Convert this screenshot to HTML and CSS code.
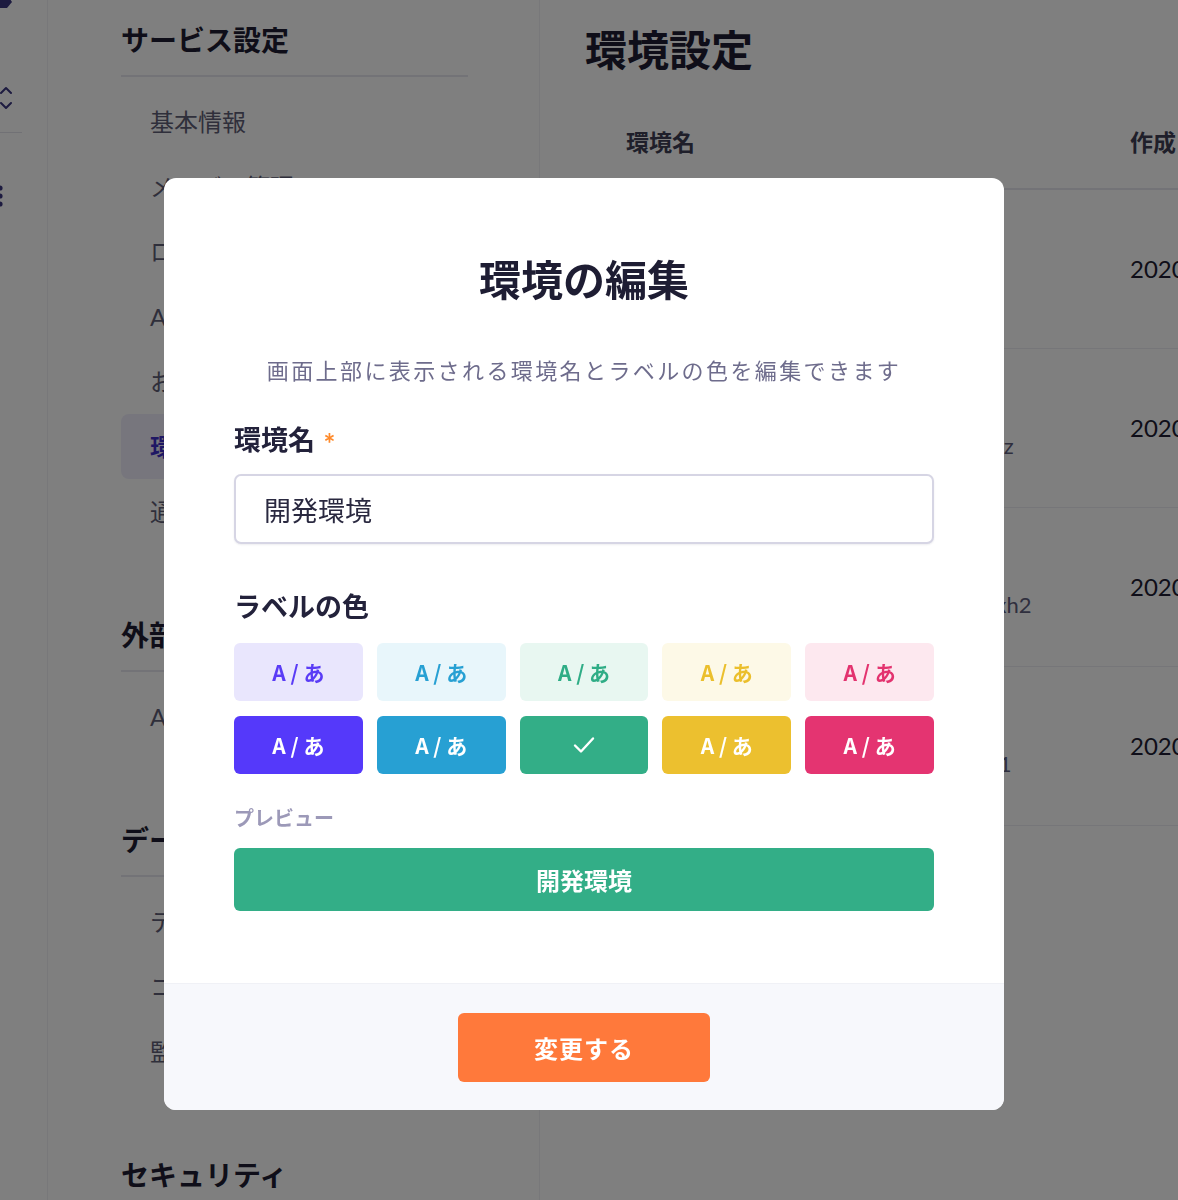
FILE: index.html
```html
<!DOCTYPE html>
<html lang="ja">
<head>
    <meta charset="utf-8">
    <title>環境設定</title>
    <link rel="stylesheet" href="styles.css">
</head>
<body>
    <div class="app">
        <nav class="rail">
            <div class="rail-inner">
                <svg class="rail-logo" width="24" height="16" viewBox="0 0 24 16"><path d="M2 0h16l4 6-5 6H6L0 6z" fill="#3a3680"/></svg>
                <svg class="rail-switch" width="16" height="28" viewBox="0 0 16 28"><path d="M3 9l5-5 5 5M3 19l5 5 5-5" fill="none" stroke="#3a3680" stroke-width="2" stroke-linecap="round" stroke-linejoin="round"/></svg>
                <div class="rail-divider"></div>
                <svg class="rail-more" width="8" height="24" viewBox="0 0 8 24"><circle cx="4" cy="4" r="2.6" fill="#3a3680"/><circle cx="4" cy="12" r="2.6" fill="#3a3680"/><circle cx="4" cy="20" r="2.6" fill="#3a3680"/></svg>
            </div>
        </nav>

        <aside class="settings-nav">
            <section class="nav-group">
                <h2 class="nav-title">サービス設定</h2>
                <ul class="nav-list">
                    <li>基本情報</li>
                    <li>メンバー管理</li>
                    <li>ロール管理</li>
                    <li>APIキー</li>
                    <li>お知らせ</li>
                    <li class="active">環境設定</li>
                    <li>通知設定</li>
                </ul>
            </section>
            <section class="nav-group">
                <h2 class="nav-title">外部連携</h2>
                <ul class="nav-list">
                    <li>API連携</li>
                </ul>
            </section>
            <section class="nav-group">
                <h2 class="nav-title">データ管理</h2>
                <ul class="nav-list">
                    <li>テンプレート</li>
                    <li>コンテンツ</li>
                    <li>監査ログ</li>
                </ul>
            </section>
            <section class="nav-group">
                <h2 class="nav-title">セキュリティ</h2>
            </section>
        </aside>

        <main class="content">
            <h1 class="page-title">環境設定</h1>
            <table class="env-table">
                <tr>
                    <th class="col-name">環境名</th>
                    <th>作成日</th>
                </tr>
                <tr>
                    <td class="col-name"><div class="env-name">本番環境</div><div class="env-id">production</div></td>
                    <td class="date">2020/03/12 10:24</td>
                </tr>
                <tr>
                    <td class="col-name"><div class="env-name">開発環境</div><div class="env-id">dev-service-admin-console-001-ab9fkrz</div></td>
                    <td class="date">2020/04/01 15:02</td>
                </tr>
                <tr>
                    <td class="col-name"><div class="env-name">ステージング</div><div class="env-id">stg-service-admin-console-001-ab7p2xh2</div></td>
                    <td class="date">2020/04/18 09:41</td>
                </tr>
                <tr>
                    <td class="col-name"><div class="env-name">検証環境</div><div class="env-id">test-service-admin-console-001-ab9qr1</div></td>
                    <td class="date">2020/05/07 18:30</td>
                </tr>
            </table>
        </main>
    </div>

    <div class="overlay">
        <div class="modal">
            <div class="modal-body">
                <h2 class="modal-title">環境の編集</h2>
                <p class="modal-lead">画面上部に表示される環境名とラベルの色を編集できます</p>

                <label class="field-label" for="envName">環境名 <span class="required">*</span></label>
                <input id="envName" class="text-input" type="text" value="開発環境">

                <div class="field-label label-gap">ラベルの色</div>
                <div class="swatches">
                    <button class="swatch light purple">A / あ</button>
                    <button class="swatch light blue">A / あ</button>
                    <button class="swatch light green">A / あ</button>
                    <button class="swatch light yellow">A / あ</button>
                    <button class="swatch light pink">A / あ</button>
                    <button class="swatch solid purple">A / あ</button>
                    <button class="swatch solid blue">A / あ</button>
                    <button class="swatch solid green selected">
                        <svg width="26" height="22" viewBox="0 0 26 22"><path d="M4 11.5l6 6L22 4.5" fill="none" stroke="#fff" stroke-width="2.4" stroke-linecap="round" stroke-linejoin="round"/></svg>
                    </button>
                    <button class="swatch solid yellow">A / あ</button>
                    <button class="swatch solid pink">A / あ</button>
                </div>

                <div class="preview-label">プレビュー</div>
                <div class="preview-bar">開発環境</div>
            </div>
            <div class="modal-footer">
                <button class="submit-btn">変更する</button>
            </div>
        </div>
    </div>
</body>
</html>
```

FILE: styles.css
```css
* {
    box-sizing: border-box;
}
body {
    margin: 0;
    background-color: #fff;
    font-family: Lato, "Noto Sans CJK JP", sans-serif;
    color: #23223b;
    overflow: hidden;
}
ul {
    list-style: none;
    margin: 0;
    padding: 0;
}

/* ---- page under the dialog ---- */
.app {
    display: flex;
    height: 1200px;
}
.rail {
    width: 48px;
    flex-shrink: 0;
    border-right: 1px solid #f0f0f4;
    overflow: hidden;
}
.rail-inner {
    display: flex;
    flex-direction: column;
    margin-left: -10px;
}
.rail-logo {
    margin-top: -4px;
}
.rail-switch {
    margin-top: 72px;
    margin-left: 8px;
}
.rail-divider {
    width: 32px;
    height: 1px;
    background-color: #e2e2ea;
    margin-top: 20px;
}
.rail-more {
    margin-top: 51px;
    margin-left: 6px;
}

.settings-nav {
    width: 492px;
    flex-shrink: 0;
    border-right: 1px solid #f0f0f4;
    padding: 20px 71px 0 73px;
}
.nav-group + .nav-group {
    margin-top: 71px;
}
.nav-title {
    margin: 0;
    font-size: 28px;
    line-height: 40px;
    font-weight: 700;
    color: #1e1d33;
    padding-bottom: 15px;
    border-bottom: 2px solid #e6e6ee;
}
.nav-list {
    margin-top: 12px;
}
.nav-list li {
    height: 65px;
    line-height: 65px;
    padding-left: 29px;
    font-size: 24px;
    color: #5f5e76;
    border-radius: 8px;
}
.nav-list li.active {
    background-color: #eeedfa;
    color: #3e2fc8;
    font-weight: 700;
}

.content {
    flex: 1;
    padding-left: 45px;
    overflow: hidden;
}
.page-title {
    margin: 20px 0 0;
    font-size: 42px;
    line-height: 60px;
    font-weight: 700;
    color: #1e1d33;
}
.env-table {
    margin-top: 14px;
    border-collapse: collapse;
    width: 900px;
}
.env-table th {
    height: 95px;
    padding-left: 41px;
    text-align: left;
    font-size: 23px;
    font-weight: 700;
    color: #3f3e55;
    border-bottom: 2px solid #e6e6ee;
}
.env-table td {
    height: 159px;
    padding-left: 41px;
    border-bottom: 1px solid #ececf2;
}
.col-name {
    width: 504px;
}
.env-name {
    font-size: 24px;
    font-weight: 700;
    line-height: 36px;
}
.env-id {
    font-size: 22px;
    line-height: 36px;
    color: #5f5e7c;
    white-space: nowrap;
}
.date {
    font-size: 24px;
    color: #1e1d33;
}

/* ---- dialog ---- */
.overlay {
    position: fixed;
    inset: 0;
    background-color: rgba(0, 0, 0, 0.5);
    padding: 178px 0 0 164px;
}
.modal {
    width: 840px;
    background-color: #fff;
    border-radius: 12px;
    overflow: hidden;
}
.modal-body {
    display: flex;
    flex-direction: column;
    padding: 72px 70px 72px;
}
.modal-title {
    margin: 0;
    text-align: center;
    font-size: 42px;
    line-height: 60px;
    font-weight: 700;
    color: #1e1d33;
}
.modal-lead {
    margin: 44px 0 0;
    text-align: center;
    font-size: 22px;
    line-height: 34px;
    color: #6e6c8c;
    letter-spacing: 2.4px;
}
.field-label {
    margin-top: 31px;
    font-size: 27px;
    line-height: 40px;
    font-weight: 700;
    color: #23223b;
}
.label-gap {
    margin-top: 43px;
}
.required {
    display: inline-block;
    color: #ff8a2a;
    font-size: 28px;
    font-weight: 700;
    margin-left: 2px;
    transform: translateY(4px);
}
.text-input {
    margin-top: 14px;
    height: 70px;
    width: 100%;
    border: 2px solid #d6d5e4;
    border-radius: 7px;
    padding: 0 28px;
    font-family: inherit;
    font-size: 27px;
    color: #2a2940;
    box-shadow: 0 1px 2px rgba(30, 30, 60, 0.08);
}
.swatches {
    margin-top: 16px;
    display: grid;
    grid-template-columns: repeat(5, 1fr);
    column-gap: 14px;
    row-gap: 15px;
}
.swatch {
    height: 58px;
    border: none;
    border-radius: 6px;
    font-family: "Noto Sans CJK JP", sans-serif;
    font-size: 21px;
    font-weight: 700;
    display: flex;
    align-items: center;
    justify-content: center;
    cursor: pointer;
}
.swatch.solid {
    color: #fff;
}
.light.purple { background-color: #e9e6fd; color: #5a3cf6; }
.light.blue { background-color: #e8f6fb; color: #27a0d3; }
.light.green { background-color: #e8f7f1; color: #2fad86; }
.light.yellow { background-color: #fdf9e7; color: #ebbf2c; }
.light.pink { background-color: #fde8ef; color: #e3336f; }
.solid.purple { background-color: #5539fa; }
.solid.blue { background-color: #27a0d3; }
.solid.green { background-color: #33ae87; }
.solid.yellow { background-color: #ecc02f; }
.solid.pink { background-color: #e43471; }

.preview-label {
    margin-top: 30px;
    font-size: 20px;
    line-height: 28px;
    font-weight: 700;
    color: #9c99b8;
}
.preview-bar {
    margin-top: 16px;
    height: 63px;
    border-radius: 6px;
    background-color: #33ae87;
    color: #fff;
    font-size: 24px;
    font-weight: 700;
    display: flex;
    align-items: center;
    justify-content: center;
}
.modal-footer {
    background-color: #f7f8fc;
    border-top: 1px solid #f0f1f6;
    padding: 29px 0 28px;
    display: flex;
    justify-content: center;
}
.submit-btn {
    width: 252px;
    height: 69px;
    border: none;
    border-radius: 6px;
    background-color: #ff793b;
    color: #fff;
    font-family: inherit;
    font-size: 24px;
    font-weight: 700;
    letter-spacing: 1px;
    cursor: pointer;
}
```
